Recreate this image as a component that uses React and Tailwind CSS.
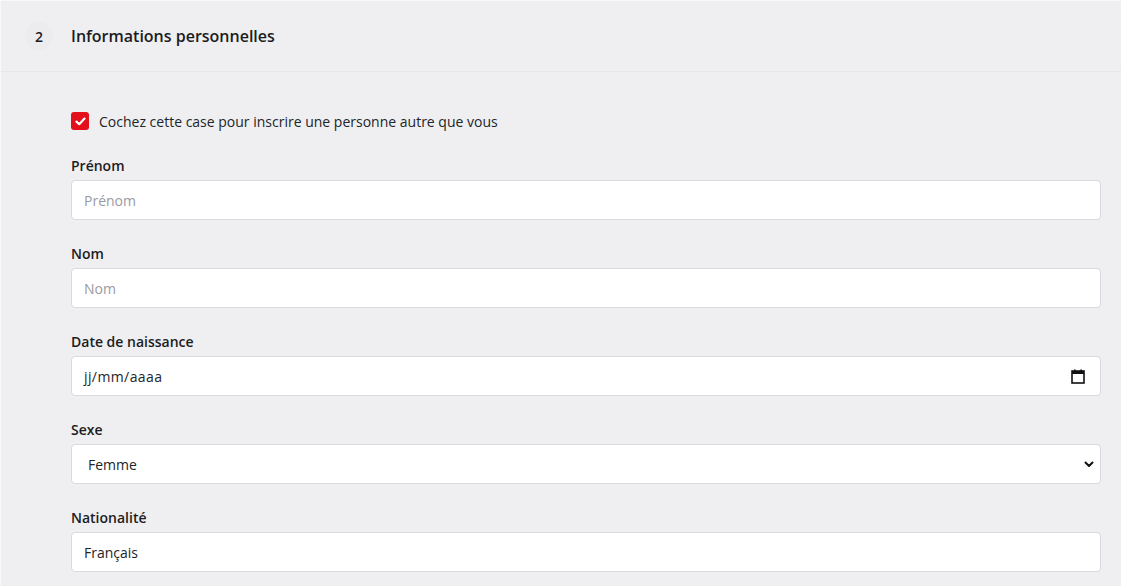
import React from 'react';

const Field = ({ label, children }) => (
  <div className="mb-6">
    <label className="block text-[14px] leading-5 font-semibold text-[#1c1c1f] mb-1">{label}</label>
    {children}
  </div>
);

const boxCls =
  'flex items-center w-full h-10 bg-white border border-[#d9d9df] rounded-[4px] text-[14px] text-[#212529]';

export default function App() {
  return (
    <div className="min-h-screen bg-[#efeff1] font-['Open_Sans',sans-serif] border-t border-l border-[#f8f8f9] overflow-hidden">
      {/* section header */}
      <div className="flex items-center h-[71px] pl-6 border-b border-[#e7e7ea]">
        <div className="w-7 h-7 rounded-full bg-[#ececef] flex items-center justify-center text-[14px] font-semibold text-[#1c1c1f]">
          2
        </div>
        <h2 className="ml-[18px] text-[16px] font-semibold text-[#1c1c1f]">Informations personnelles</h2>
      </div>

      <div className="pl-[70px] pr-5 pt-[39px]">
        {/* checkbox row */}
        <div className="flex items-center h-5 mb-[25px]">
          <span className="w-[18px] h-[18px] rounded-[3px] bg-[#e3101b] flex items-center justify-center">
            <svg width="11" height="9" viewBox="0 0 11 9" fill="none">
              <path d="M1.5 4.6 L4.2 7.2 L9.5 1.6" stroke="white" strokeWidth="2.2" strokeLinecap="round" strokeLinejoin="round" />
            </svg>
          </span>
          <span className="ml-[10px] text-[14px] text-[#212529]">Cochez cette case pour inscrire une personne autre que vous</span>
        </div>

        <Field label="Prénom">
          <input
            className={boxCls + ' px-3 outline-none placeholder:text-[#9a9aa3]'}
            placeholder="Prénom"
          />
        </Field>

        <Field label="Nom">
          <input
            className={boxCls + ' px-3 outline-none placeholder:text-[#9a9aa3]'}
            placeholder="Nom"
          />
        </Field>

        <Field label="Date de naissance">
          <div className={boxCls + ' pl-3 pr-[15px] justify-between'}>
            <span className="tracking-[0.4px]">jj/mm/aaaa</span>
            <svg width="14" height="15" viewBox="0 0 14 15" fill="none">
              <rect x="1" y="2" width="12" height="12" stroke="#111" strokeWidth="1.6" fill="none" />
              <rect x="1" y="2" width="12" height="3" fill="#111" />
              <rect x="3" y="0.5" width="1.6" height="2" fill="#111" />
              <rect x="9.4" y="0.5" width="1.6" height="2" fill="#111" />
            </svg>
          </div>
        </Field>

        <Field label="Sexe">
          <div className={boxCls + ' pl-4 pr-[6px] justify-between'}>
            <span>Femme</span>
            <svg width="10" height="7" viewBox="0 0 10 7" fill="none">
              <path d="M1.5 1.5 L5 5 L8.5 1.5" stroke="#111" strokeWidth="2" strokeLinecap="round" strokeLinejoin="round" />
            </svg>
          </div>
        </Field>

        <Field label="Nationalité">
          <input className={boxCls + ' px-3 outline-none'} defaultValue="Français" />
        </Field>
      </div>
    </div>
  );
}
